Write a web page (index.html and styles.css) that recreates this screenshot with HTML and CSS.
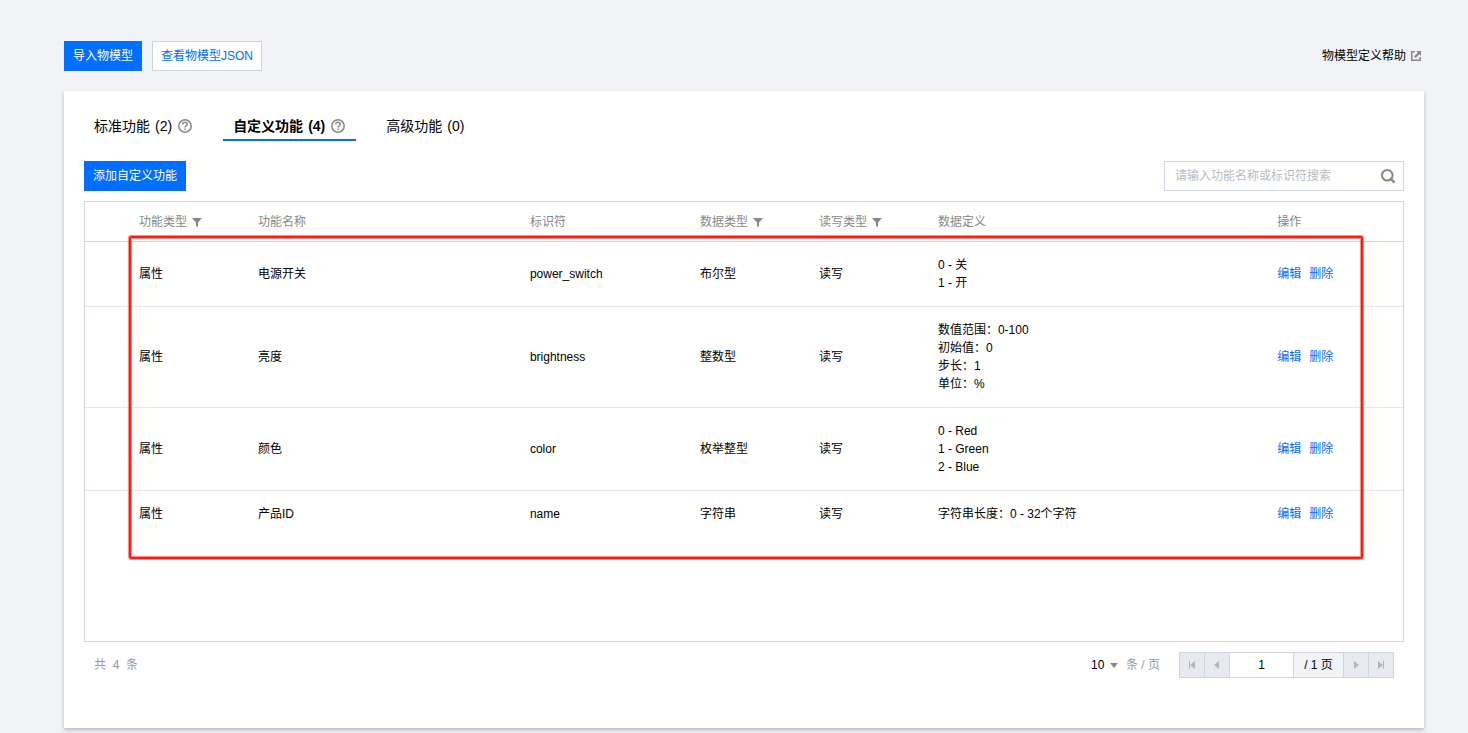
FILE: index.html
```html
<!DOCTYPE html>
<html lang="zh-CN">
<head>
<meta charset="utf-8">
<meta name="viewport" content="width=device-width, initial-scale=1">
<title>物模型</title>
<link rel="stylesheet" href="styles.css">
</head>
<body>
<svg class="sprite" aria-hidden="true">
  <symbol id="help" viewBox="0 0 16 16"><circle cx="8" cy="8" r="6.2" fill="none" stroke="#888" stroke-width="1.5"/><path d="M5.7 6.5C5.7 3.6 10.3 3.7 10.2 6.4C10.2 7.9 8 7.8 8 9.5" fill="none" stroke="#888" stroke-width="1.5"/><path d="M7.2 10.5h1.6v1.6H7.2z" fill="#888"/></symbol>
  <symbol id="filter" viewBox="0 0 10 10"><path d="M0 1h10L6 5.5V9.5H4V5.5z" fill="#888"/></symbol>
  <symbol id="prev" viewBox="0 0 8 8"><path d="M6 0v8L1 4z" fill="#b3b5ba"/></symbol>
  <symbol id="next" viewBox="0 0 8 8"><path d="M2 0v8l5-4z" fill="#b3b5ba"/></symbol>
  <symbol id="first" viewBox="0 0 8 8"><path d="M1 0h1v8H1zM7 0v8L2 4z" fill="#b3b5ba"/></symbol>
  <symbol id="last" viewBox="0 0 8 8"><path d="M6 0h1v8H6zM1 0v8l5-4z" fill="#b3b5ba"/></symbol>
</svg>
<main class="page">
  <header class="topbar">
    <div class="actions">
      <button class="btn btn-primary" type="button">导入物模型</button>
      <button class="btn btn-plain" type="button">查看物模型JSON</button>
    </div>
    <a class="help-link" href="#">物模型定义帮助<svg class="icon-external" viewBox="0 0 10 10"><path d="M4 0H0v10h10V6H8.4v2.4H1.6V1.6H4z" fill="#888"/><path d="M5.2 0H10v4.8L8.4 3.2 4.6 7 3 5.4 6.8 1.6z" fill="#888"/></svg></a>
  </header>
  <section class="card">
    <div class="tabs" role="tablist">
      <button class="tab" type="button" role="tab" aria-selected="false"><span>标准功能</span><span>(2)</span><svg class="icon-help"><use href="#help"/></svg></button>
      <button class="tab tab-active" type="button" role="tab" aria-selected="true"><span>自定义功能</span><span>(4)</span><svg class="icon-help"><use href="#help"/></svg></button>
      <button class="tab" type="button" role="tab" aria-selected="false"><span>高级功能</span><span>(0)</span></button>
    </div>
    <div class="toolbar">
      <button class="btn btn-primary" type="button">添加自定义功能</button>
      <form class="search" role="search">
        <input class="search-input" type="text" aria-label="搜索功能" placeholder="请输入功能名称或标识符搜索">
        <button class="search-btn" type="button" aria-label="搜索"><svg class="icon-search" viewBox="0 0 16 16"><circle cx="7.3" cy="7.3" r="5.3" fill="none" stroke="#888" stroke-width="2"/><path d="M10.8 10.8l3 3" stroke="#888" stroke-width="2.4" stroke-linecap="round"/></svg></button>
      </form>
    </div>
    <div class="table-box">
      <table class="table">
        <colgroup><col class="c-blank"><col class="c-narrow"><col class="c-name"><col class="c-id"><col class="c-narrow"><col class="c-narrow"><col class="c-def"><col></colgroup>
        <thead>
          <tr>
            <td></td>
            <th scope="col">功能类型<svg class="icon-filter"><use href="#filter"/></svg></th>
            <th scope="col">功能名称</th>
            <th scope="col">标识符</th>
            <th scope="col">数据类型<svg class="icon-filter"><use href="#filter"/></svg></th>
            <th scope="col">读写类型<svg class="icon-filter"><use href="#filter"/></svg></th>
            <th scope="col">数据定义</th>
            <th scope="col">操作</th>
          </tr>
        </thead>
        <tbody>
          <tr><td></td><td>属性</td><td>电源开关</td><td>power_switch</td><td>布尔型</td><td>读写</td><td>0 - 关<br>1 - 开</td><td><div class="ops"><a href="#">编辑</a><a href="#">删除</a></div></td></tr>
          <tr><td></td><td>属性</td><td>亮度</td><td>brightness</td><td>整数型</td><td>读写</td><td>数值范围：0-100<br>初始值：0<br>步长：1<br>单位：%</td><td><div class="ops"><a href="#">编辑</a><a href="#">删除</a></div></td></tr>
          <tr><td></td><td>属性</td><td>颜色</td><td>color</td><td>枚举整型</td><td>读写</td><td>0 - Red<br>1 - Green<br>2 - Blue</td><td><div class="ops"><a href="#">编辑</a><a href="#">删除</a></div></td></tr>
          <tr><td></td><td>属性</td><td>产品ID</td><td>name</td><td>字符串</td><td>读写</td><td>字符串长度：0 - 32个字符</td><td><div class="ops"><a href="#">编辑</a><a href="#">删除</a></div></td></tr>
        </tbody>
      </table>
      <div class="highlight"></div>
    </div>
    <footer class="footer">
      <span class="total">共&nbsp; 4&nbsp; 条</span>
      <div class="paging">
        <label class="size"><span class="select-wrap"><select class="size-select"><option>10</option><option>20</option></select><svg class="icon-caret" viewBox="0 0 8 5"><path d="M0 0h8L4 5z" fill="#888"/></svg></span>条 / 页</label>
        <nav class="pager" aria-label="分页">
          <button class="pager-btn" type="button" aria-label="第一页"><svg class="icon-page"><use href="#first"/></svg></button>
          <button class="pager-btn" type="button" aria-label="上一页"><svg class="icon-page"><use href="#prev"/></svg></button>
          <input class="pager-input" type="text" value="1" aria-label="页码">
          <span class="pager-total">/ 1 页</span>
          <button class="pager-btn" type="button" aria-label="下一页"><svg class="icon-page"><use href="#next"/></svg></button>
          <button class="pager-btn" type="button" aria-label="最后一页"><svg class="icon-page"><use href="#last"/></svg></button>
        </nav>
      </div>
    </footer>
  </section>
</main>
</body>
</html>
```
FILE: styles.css
```css
* { box-sizing: border-box; }
body {
  margin: 0;
  background: #f2f3f7;
  color: #000;
  font: 12px/18px "Liberation Sans", "Noto Sans CJK SC", sans-serif;
}
button, input, select { font: inherit; color: inherit; margin: 0; border-radius: 0; }
button { cursor: pointer; }
a { color: #006eff; text-decoration: none; }
.sprite { display: none; }
.page { padding: 41px 44px 5px 64px; }
.topbar { display: flex; justify-content: space-between; align-items: center; margin-bottom: 20px; }
.actions { display: flex; gap: 10px; }
.btn { height: 30px; padding: 0 8px; border: 1px solid #006eff; }
.btn-primary { background: #006eff; color: #fff; }
.btn-plain { background: #fff; border-color: #cfd5de; color: #006eff; }
.help-link { display: flex; align-items: center; gap: 5px; padding-right: 3px; color: #000; }
.icon-external { width: 10px; height: 10px; }
.card { padding: 20px 20px 50px; background: #fff; box-shadow: 0 2px 4px rgba(54, 58, 80, .32); }
.tabs { display: flex; gap: 20px; margin-bottom: 20px; }
.tab {
  display: flex;
  align-items: center;
  gap: 5px;
  height: 30px;
  padding: 2px 10px 0;
  border: 0;
  border-bottom: 2px solid transparent;
  background: none;
  font-size: 14px;
}
.tab-active { border-color: #006eff; font-weight: bold; }
.icon-help { width: 16px; height: 16px; }
.toolbar { display: flex; justify-content: space-between; margin-bottom: 10px; }
.search { display: flex; width: 240px; height: 30px; border: 1px solid #cfd5de; }
.search-input { flex: 1; min-width: 0; padding: 0 10px; border: 0; background: none; }
.search-input::placeholder { color: #bbb; }
.search-btn { display: flex; align-items: center; padding: 0 7px 0 0; border: 0; background: none; }
.icon-search { width: 16px; height: 16px; }
.table-box { position: relative; min-height: 441px; border: 1px solid #cfd5de; }
.table { width: 100%; table-layout: fixed; border-collapse: separate; border-spacing: 0; }
.c-blank { width: 44px; }
.c-narrow { width: 9.03%; }
.c-name { width: 20.63%; }
.c-id { width: 12.9%; }
.c-def { width: 25.75%; }
.table th, .table td { padding: 14px 10px; text-align: left; vertical-align: middle; }
.table thead th, .table thead td { height: 40px; padding: 0 10px; border-bottom: 1px solid #cfd5de; color: #888; font-weight: normal; }
.table tbody td { border-bottom: 1px solid #e5e8ed; }
.table tbody tr:last-child td { border-bottom: 0; }
.icon-filter { width: 10px; height: 10px; margin-left: 5px; vertical-align: -1px; }
.ops { display: flex; gap: 8px; }
.highlight {
  position: absolute;
  top: 34px;
  bottom: 82px;
  left: 44px;
  right: 40px;
  border: 2px solid #ff1a10;
  border-radius: 2px;
  box-shadow: 0 0 0 1px rgba(255, 26, 16, .5), inset 0 0 0 1px rgba(255, 26, 16, .5);
  pointer-events: none;
}
.footer { display: flex; justify-content: space-between; align-items: center; padding: 10px 10px 0; color: #999; }
.paging { display: flex; align-items: center; gap: 19px; }
.size { display: flex; align-items: center; gap: 8px; }
.select-wrap { display: flex; align-items: center; }
.size-select { width: 27px; margin-right: -8px; padding: 0; border: 0; background: none; color: #000; appearance: none; }
.icon-caret { width: 8px; height: 5px; pointer-events: none; }
.pager { display: flex; height: 26px; border: 1px solid #cfd5de; color: #000; }
.pager-btn { display: flex; align-items: center; justify-content: center; width: 25px; padding: 0; border: 0; border-right: 1px solid #cfd5de; background: #e7eaef; }
.pager-btn:last-child { width: 24px; border-right: 0; }
.pager-input { width: 64px; padding: 0; border: 0; border-right: 1px solid #cfd5de; background: #fff; text-align: center; }
.pager-total { display: flex; align-items: center; justify-content: center; width: 50px; border-right: 1px solid #cfd5de; background: #f2f3f7; }
.icon-page { width: 8px; height: 8px; }
```
